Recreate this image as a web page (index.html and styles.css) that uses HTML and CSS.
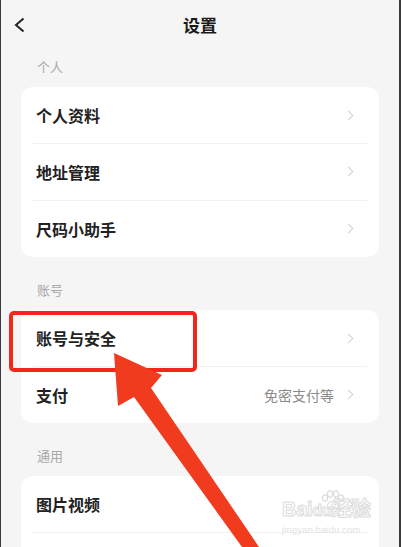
FILE: index.html
```html
<!DOCTYPE html>
<html lang="zh-CN">
<head>
<meta charset="UTF-8" />
<meta name="viewport" content="width=device-width, initial-scale=1" />
<title>设置</title>
<link rel="stylesheet" href="styles.css">
</head>
<body>
<div class="screen">
  <header class="topbar">
    <a class="back" href="#" aria-label="返回">
      <svg width="12" height="16" viewBox="0 0 12 16"><polyline points="9.5,1.5 2,8 9.5,14.5" fill="none" stroke="#222" stroke-width="2" stroke-linejoin="miter"/></svg>
    </a>
    <h1>设置</h1>
    <span></span>
  </header>

  <main class="groups">
    <section class="group first">
      <div class="group-title">个人</div>
      <div class="card">
        <a class="row" href="#"><span class="row-name">个人资料</span><i class="chev"></i></a>
        <a class="row" href="#"><span class="row-name">地址管理</span><i class="chev"></i></a>
        <a class="row" href="#"><span class="row-name">尺码小助手</span><i class="chev"></i></a>
      </div>
    </section>

    <section class="group">
      <div class="group-title">账号</div>
      <div class="card">
        <a class="row" href="#"><span class="row-name">账号与安全</span><i class="chev"></i></a>
        <a class="row" href="#"><span class="row-name">支付</span><span class="row-note">免密支付等</span><i class="chev"></i></a>
      </div>
    </section>

    <section class="group">
      <div class="group-title">通用</div>
      <div class="card">
        <a class="row" href="#"><span class="row-name">图片视频</span><i class="chev"></i></a>
        <a class="row" href="#"><span class="row-name"></span></a>
      </div>
    </section>
  </main>

  <!-- 标注：红框 + 箭头 -->
  <div class="mark-box"></div>
  <svg class="mark-arrow" width="401" height="547" viewBox="0 0 401 547">
    <polygon points="114,353 162,375 151,388 259,547 242,547 134,397 118,406" fill="#f03b1e"/>
  </svg>

  <div class="watermark">
    <svg class="paw" width="26" height="22" viewBox="0 0 26 22">
      <g fill="none" stroke="#dcdcdc" stroke-width="1.2">
        <ellipse cx="6" cy="8" rx="2.6" ry="3.2"/>
        <ellipse cx="11" cy="4" rx="2.6" ry="3.2"/>
        <ellipse cx="17" cy="4" rx="2.6" ry="3.2"/>
        <ellipse cx="22" cy="8" rx="2.6" ry="3.2"/>
        <path d="M8 19 C8 13 11 11 14 11 C17 11 20 13 20 19 Z"/>
      </g>
    </svg>
    <div class="wm-name">Bai<span class="wm-du">du</span>经验</div>
    <div class="wm-url">jingyan.baidu.com</div>
  </div>
</div>
</body>
</html>
```

FILE: styles.css
```css
* { box-sizing: border-box; }
html, body {
  margin: 0; padding: 0;
}
body {
  font-family: "Noto Sans CJK SC", "Noto Sans", sans-serif; color: #222; background: #f5f5f5;
}
a { color: inherit; text-decoration: none; }

.screen {
  position: relative; width: 401px; height: 547px; overflow: hidden;
  background: #f5f5f5; border-left: 1px solid #3a3a3a; border-right: 2px solid #3a3a3a;
}

.topbar {
  height: 50px; display: grid; grid-template-columns: 40px 1fr 40px; align-items: center;
}
.topbar .back {
  display: flex; align-items: center; padding-left: 13px; height: 100%;
}
.topbar h1 {
  margin: 0; text-align: center; font-size: 17px; font-weight: 700; color: #1a1a1a; line-height: 22px;
}

.groups {
  padding: 0 20px;
}
.group { margin-top: 23px; }
.group.first { margin-top: 7px; }
.group-title {
  height: 20px; line-height: 20px; font-size: 13px; color: #a8a8a8; padding-left: 16px; margin-bottom: 10px;
}

.card {
  background: #fff; border-radius: 12px; overflow: hidden;
}
.row {
  position: relative; display: flex; align-items: center; height: 57px; padding: 0 26px 0 15px;
}
.row + .row::before {
  content: ''; position: absolute; top: 0; left: 12px; right: 12px; height: 1px; background: #f1f1f1;
}
.row:first-child { height: 56px; }
.row-name {
  flex: 1; font-size: 16px; font-weight: 600; color: #222;
}
.row-note {
  font-size: 14px; color: #8a8a8a; margin-right: 11px;
}
.chev {
  width: 7px; height: 7px; border-top: 1.5px solid #cfcfcf; border-right: 1.5px solid #cfcfcf;
  transform: rotate(45deg); margin-right: 1px;
}

.mark-box {
  position: absolute; left: 8px; top: 311px; width: 188px; height: 61px;
  border: 4px solid #f2261b; border-radius: 5px;
}
.mark-arrow {
  position: absolute; left: -1px; top: 0; pointer-events: none;
}

.watermark {
  position: absolute; left: 281px; top: 497px; width: 110px; pointer-events: none; white-space: nowrap;
  font-family: "Liberation Sans", "Noto Sans CJK SC", sans-serif; color: #fff;
}
.watermark .paw { position: absolute; left: 37px; top: -7px; }
.wm-name {
  font-size: 20px; font-weight: 700; line-height: 24px; letter-spacing: -0.3px;
  -webkit-text-stroke: 1px #dcdcdc; color: rgba(255,255,255,0.6);
}
.wm-du { font-size: 16px; }
.wm-url {
  font-size: 9.5px; line-height: 12px; color: #e2e2e2; margin-top: 1px; letter-spacing: 0.1px;
}
```
